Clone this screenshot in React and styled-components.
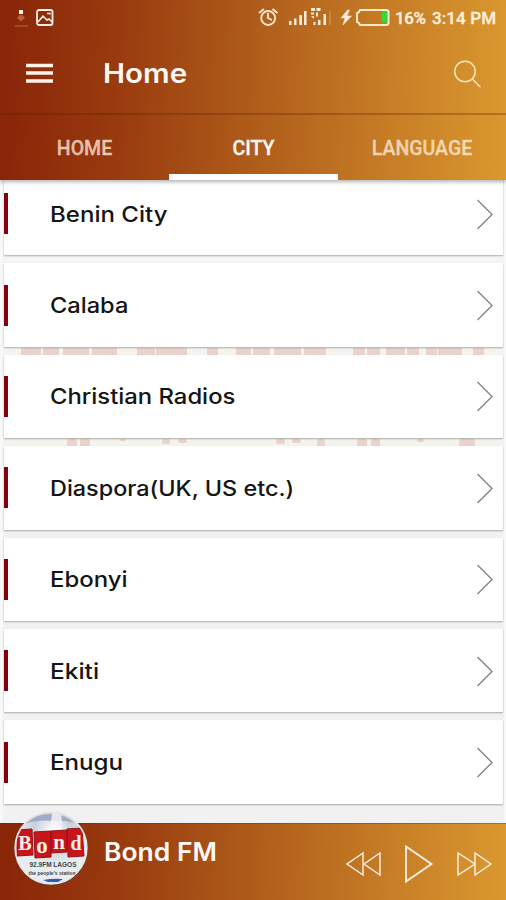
import React from "react";
import styled, { createGlobalStyle } from "styled-components";

const brand = "linear-gradient(92deg, #892508 0%, #98390e 22%, #ae5b1a 49%, #c57b25 75%, #da982f 100%)";

const Global = createGlobalStyle`
  * { box-sizing: border-box; }
  body { margin: 0; background: #f2f2f2; }
  button { border: 0; padding: 0; background: none; display: flex; color: inherit; }
  svg { display: block; flex: none; }
`;

const Screen = styled.div`
  position: relative;
  width: 506px;
  height: 900px;
  overflow: hidden;
  display: flex;
  flex-direction: column;
  font-family: Inter, "Liberation Sans", sans-serif;
`;

const Header = styled.header`
  height: 115px;
  background: ${brand};
  border-bottom: 2px solid rgba(100, 35, 0, 0.28);
  color: #fff8f3;
`;

const StatusBar = styled.div`
  height: 36px;
  display: flex;
  align-items: center;
  justify-content: space-between;
  padding: 0 12px 0 13px;
  font: 500 17px/36px Roboto, sans-serif;
`;

const StatusIcons = styled.div`
  display: flex;
  align-items: center;
`;

const StatusText = styled.span`
  width: ${(p) => p.$width}px;
  letter-spacing: ${(p) => p.$tracking}px;
  margin-left: ${(p) => p.$gap}px;
  white-space: nowrap;
  color: #fff0df;
  -webkit-text-stroke: 0.3px #fff0df;
`;

const AppBar = styled.div`
  height: 77px;
  display: flex;
  align-items: center;
  padding: 0 24px 2px 26px;
`;

const Wide = styled.span`
  display: inline-block;
  transform: scaleX(${(p) => p.$stretch});
  transform-origin: left center;
  white-space: nowrap;
`;

const Title = styled.h1`
  flex: 1;
  margin: 1px 0 0 50px;
  font-size: 27px;
  font-weight: 600;
  line-height: 34px;
`;

const Tabs = styled.nav`
  position: relative;
  z-index: 2;
  height: 65px;
  display: grid;
  grid-template-columns: 169px 169px 168px;
  background: ${brand};
  box-shadow: 0 2px 4px rgba(0, 0, 0, 0.3);
`;

const Tab = styled.div`
  height: 65px;
  padding-top: 5px;
  text-align: center;
  font: 500 19.5px/58px Roboto, sans-serif;
  letter-spacing: 0;
  color: ${(p) => (p.$active ? "#fffaf5" : "rgba(255, 238, 222, 0.74)")};
  -webkit-text-stroke: 0.3px currentColor;
  box-shadow: ${(p) => (p.$active ? "inset 0 -6px #fff" : "none")};
`;

const ListView = styled.main`
  position: relative;
  height: 643px;
  overflow: hidden;
  background: linear-gradient(#f6f7f7 0, #f4f4f0 150px, #f4f3ee 270px, #f1f1f1 340px, #f1f1f1 100%);
  box-shadow: inset 3px 0 #f8f8f9, inset -2px 0 #f8f8f8;
`;

const Backdrop = styled.svg`
  position: absolute;
  left: 0;
  top: 0;
`;

const Rows = styled.ul`
  position: relative;
  list-style: none;
  margin: -8px 3px 0 3.5px;
  padding: 0;
  display: flex;
  flex-direction: column;
  gap: 8px;
`;

const Row = styled.li`
  height: 83.4px;
  background: #fff;
  box-shadow: 0 1px 1.5px rgba(0, 0, 0, 0.3);
  display: flex;
  align-items: center;
  padding-right: 9px;
`;

const Marker = styled.span`
  width: 4px;
  height: 41px;
  background: #84000e;
`;

const City = styled.span`
  flex: 1;
  padding: 2px 0 0 42px;
  font-size: 21px;
  font-weight: 500;
  line-height: 28px;
  color: #151515;
`;

const Player = styled.footer`
  position: relative;
  z-index: 3;
  height: 77px;
  background: ${brand};
  border-top: 1px solid rgba(120, 35, 0, 0.4);
  display: flex;
  align-items: flex-start;
  padding: 0 13px 0 13px;
  color: #fff3e6;
`;

const Logo = styled.svg`
  margin-top: -14px;
`;

const Station = styled.div`
  flex: 1;
  margin: 11px 0 0 15px;
  font-size: 25px;
  font-weight: 600;
  line-height: 34px;
  color: #fffaf7;
`;

const Controls = styled.div`
  display: flex;
  align-items: center;
  height: 80px;
  gap: 22.5px;
`;

const cities = [
  ["Benin City", 1.145],
  ["Calaba", 1.125],
  ["Christian Radios", 1.135],
  ["Diaspora(UK, US etc.)", 1.115],
  ["Ebonyi", 1.14],
  ["Ekiti", 1.165],
  ["Enugu", 1.15],
];

const upperMarks = [[21,20],[43,16],[63,26],[92,25],[137,18],[156,31],[207,11],[236,15],[253,17],[274,27],[304,22],[353,12],[367,13],[386,19],[407,12],[426,11],[438,24],[473,11]];
const lowerMarks = [[67,10,8],[80,10,8],[119,7,2],[162,8,5],[178,9,4],[276,9,5],[292,9,4],[317,8,8],[357,10,8],[371,9,8],[417,7,3],[459,16,8]];

function DownloadIcon() {
  return (
    <svg width="17" height="20" viewBox="0 0 17 20">
      <rect x="6" y="2" width="4" height="4" fill="#fff8ed" />
      <path d="M6.500 7h3l2.500 3-4 3.500-4-3.500z" fill="#b5603b" />
      <path d="M2 18h13" stroke="#a94e2d" strokeWidth="1.800" />
    </svg>
  );
}

function ImageIcon() {
  return (
    <svg width="28" height="20" viewBox="0 0 28 20" fill="none" stroke="#fff0e7" strokeWidth="1.8">
      <rect x="7" y="2" width="15.5" height="15" rx="2" />
      <path d="m8 14 5-6 4 4 2-1 3 3M17 5.500h3v1" strokeWidth="1.5" />
    </svg>
  );
}

function StatusDrawings() {
  return (
    <svg width="132" height="28" viewBox="258 4 132 28" fill="none">
      <g stroke="#ffe7cf" strokeWidth="1.9">
        <circle cx="268.2" cy="18" r="7" />
        <path d="m259 13 5-4M277.500 13l-5-4M268 13v5l4 2" />
      </g>
      <g fill="#ffebd7">
        <path d="M289 21h2.500v4H289zM294 18.500h2.500V25H294zM299.300 15h2.700v10h-2.700zM304 11h2.500v14H304z" />
        <path d="M311 8h4v3h-4zM316.500 8h4v3h-4zM311 12.500h3v2h-3zM316 12.500h2v4h-2zM311 16l3 3v-3zM318 20h2.500v5H318zM313.500 22h2v3h-2zM323.500 14h2.500v11h-2.500z" />
        <path opacity=".2" d="M329 11h2v14h-2z" />
        <path d="m347.500 10-6.500 8h4l-2 7 8.500-9h-4.500l2.500-6z" stroke="#ffebd7" strokeWidth=".5" />
      </g>
      <path d="M360 10H386q2.500 0 2.500 2v11q0 2-2.500 2h-26l-1-2-2-1v-9l2-1z" stroke="#ffe9c6" strokeWidth="2" />
      <path d="M382 11.500h5v11h-5z" fill="#32d83d" />
    </svg>
  );
}

function Chevron() {
  return (
    <svg width="18" height="32" viewBox="0 0 18 32">
      <path d="M1.500 2 16 16.500 1.500 31" fill="none" stroke="#858585" strokeWidth="1.4" />
    </svg>
  );
}

function BondLogo() {
  return (
    <Logo width="76" height="78" viewBox="13 810 76 78">
      <defs>
        <radialGradient id="disc" cx="52%" cy="25%">
          <stop stopColor="#fff" /><stop offset=".5" stopColor="#cad1d9" /><stop offset="1" stopColor="#e9edf0" />
        </radialGradient>
        <clipPath id="discClip"><circle cx="51" cy="848" r="35" /></clipPath>
      </defs>
      <circle cx="51" cy="849" r="36.500" fill="#533e38" />
      <circle cx="51" cy="848" r="36" fill="url(#disc)" stroke="#e8e7e5" strokeWidth="1.3" />
      <g clipPath="url(#discClip)">
        <path d="M25 824q10-10 26-10 16 1 23 9-8-3-20-2-17-2-29 3" fill="#a0aaca" />
        <path d="M52 813h9l2 18H50z" fill="#f4f6f8" opacity=".8" />
        <path d="M17 830l15-1 1 26-16 1zM34 832l17-1v26l-16 1zM51 831l16-1v22l-16 1zM67 829l15-1 2 28-16 1z" fill="#c7161b" stroke="#981116" />
        <path d="M43 880q10-2 20-1l-5 3H48z" fill="#3457bb" />
      </g>
      <g fill="#fff1e9" fontFamily="Liberation Serif, serif" textAnchor="middle">
        <text x="25" y="850" fontSize="20" fontWeight="700">B</text>
        <text x="42" y="853" fontSize="23" fontWeight="700">o</text>
        <text x="59" y="849" fontSize="21" fontWeight="700">n</text>
        <text x="76" y="850" fontSize="20" fontWeight="700">d</text>
      </g>
      <g fill="#39464f" fontFamily="Liberation Sans, sans-serif" fontWeight="700" textAnchor="middle">
        <text x="53" y="867" fontSize="7" textLength="47" lengthAdjust="spacingAndGlyphs">92.9FM LAGOS</text>
        <text x="52" y="875" fontSize="5.500" textLength="47" lengthAdjust="spacingAndGlyphs">the people's station</text>
      </g>
    </Logo>
  );
}

function SkipIcon({ back }) {
  return (
    <svg width="37" height="28" viewBox="0 0 37 28" fill="none" stroke="currentColor" strokeWidth="1.400">
      <path d={back ? "M18 3v22L2 14zM35 3v22L19 14z" : "M2 3v22l17-11zM19 3v22l16-11z"} />
    </svg>
  );
}

export default function App() {
  return (
    <Screen>
      <Global />
      <Header>
        <StatusBar>
          <StatusIcons><DownloadIcon /><ImageIcon /></StatusIcons>
          <StatusIcons>
            <StatusDrawings />
            <StatusText $width={31} $gap={5} $tracking={-0.4}>16%</StatusText>
            <StatusText $width={62} $gap={6} $tracking={0.1}>3:14 PM</StatusText>
          </StatusIcons>
        </StatusBar>
        <AppBar>
          <button aria-label="Menu">
            <svg width="27" height="22" viewBox="0 0 27 22"><path d="M0 2.500h27M0 10h27M0 18h27" stroke="#fff2ed" strokeWidth="3.300" /></svg>
          </button>
          <Title><Wide $stretch={1.095}>Home</Wide></Title>
          <button aria-label="Search">
            <svg width="29" height="30" viewBox="0 0 29 30" fill="none" stroke="#ffe3bd" strokeWidth="1.500"><circle cx="12" cy="12.500" r="10.300" /><path d="m19.300 20 8.200 8.300" /></svg>
          </button>
        </AppBar>
      </Header>
      <Tabs>
        <Tab>HOME</Tab><Tab $active>CITY</Tab><Tab>LANGUAGE</Tab>
      </Tabs>
      <ListView>
        <Backdrop width="506" height="643" fill="#ead3cb">
          {upperMarks.map(([x, w]) => <rect key={x} x={x} y="168" width={w} height="8" />)}
          {lowerMarks.map(([x, w, h]) => <rect key={x} x={x} y="259" width={w} height={h} rx="2" />)}
        </Backdrop>
        <Rows>
          {cities.map(([name, stretch]) => (
            <Row key={name}><Marker /><City><Wide $stretch={stretch}>{name}</Wide></City><Chevron /></Row>
          ))}
        </Rows>
      </ListView>
      <Player>
        <BondLogo />
        <Station><Wide $stretch={1.06}>Bond FM</Wide></Station>
        <Controls>
          <button aria-label="Previous"><SkipIcon back /></button>
          <button aria-label="Play"><svg width="29" height="40" viewBox="0 0 29 40" fill="none" stroke="currentColor" strokeWidth="1.800"><path d="M1 2.500v35L26.500 20z" /></svg></button>
          <button aria-label="Next"><SkipIcon /></button>
        </Controls>
      </Player>
    </Screen>
  );
}
